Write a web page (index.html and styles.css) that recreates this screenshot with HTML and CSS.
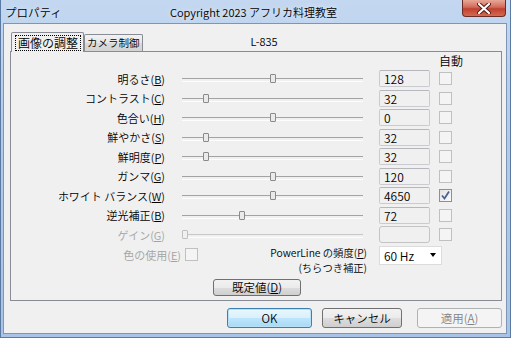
FILE: index.html
```html
<!DOCTYPE html>
<html lang="ja">
<head>
    <meta charset="UTF-8">
    <title>プロパティ</title>
    <link rel="stylesheet" href="styles.css">
</head>
<body>
    <div class="window">
        <div class="titlebar">
            <span class="app-name">プロパティ</span>
            <span class="caption">Copyright 2023 アフリカ料理教室</span>
            <div class="close-btn">
                <svg width="14" height="11" viewBox="0 0 14 11">
                    <path d="M2 1 L12 10 M12 1 L2 10" stroke="#4a1a14" stroke-width="4" stroke-linecap="round"/>
                    <path d="M2 1 L12 10 M12 1 L2 10" stroke="#fff" stroke-width="2.2" stroke-linecap="round"/>
                </svg>
            </div>
        </div>

        <div class="client">
            <div class="tab-strip">
                <div class="tab active"><span class="focus">画像の調整</span></div>
                <div class="tab">カメラ制御</div>
                <span class="model">L-835</span>
            </div>

            <div class="tab-panel">
                <div class="grid-head"><span>自動</span></div>

                <div class="prop-row">
                    <span class="prop-name">明るさ(<u>B</u>)</span>
                    <div class="slider"><span class="thumb" style="left: 88px"></span></div>
                    <div class="value">128</div>
                    <span class="check"></span>
                </div>
                <div class="prop-row">
                    <span class="prop-name">コントラスト(<u>C</u>)</span>
                    <div class="slider"><span class="thumb" style="left: 21px"></span></div>
                    <div class="value">32</div>
                    <span class="check"></span>
                </div>
                <div class="prop-row">
                    <span class="prop-name">色合い(<u>H</u>)</span>
                    <div class="slider"><span class="thumb" style="left: 88px"></span></div>
                    <div class="value">0</div>
                    <span class="check"></span>
                </div>
                <div class="prop-row">
                    <span class="prop-name">鮮やかさ(<u>S</u>)</span>
                    <div class="slider"><span class="thumb" style="left: 21px"></span></div>
                    <div class="value">32</div>
                    <span class="check"></span>
                </div>
                <div class="prop-row">
                    <span class="prop-name">鮮明度(<u>P</u>)</span>
                    <div class="slider"><span class="thumb" style="left: 21px"></span></div>
                    <div class="value">32</div>
                    <span class="check"></span>
                </div>
                <div class="prop-row">
                    <span class="prop-name">ガンマ(<u>G</u>)</span>
                    <div class="slider"><span class="thumb" style="left: 88px"></span></div>
                    <div class="value">120</div>
                    <span class="check"></span>
                </div>
                <div class="prop-row">
                    <span class="prop-name">ホワイト バランス(<u>W</u>)</span>
                    <div class="slider"><span class="thumb" style="left: 88px"></span></div>
                    <div class="value">4650</div>
                    <span class="check checked">
                        <svg width="11" height="11" viewBox="0 0 11 11">
                            <path d="M2 5.5 L4.5 8.5 L9 1.5" fill="none" stroke="#4d5f96" stroke-width="1.8"/>
                        </svg>
                    </span>
                </div>
                <div class="prop-row">
                    <span class="prop-name">逆光補正(<u>B</u>)</span>
                    <div class="slider"><span class="thumb" style="left: 57px"></span></div>
                    <div class="value">72</div>
                    <span class="check"></span>
                </div>
                <div class="prop-row disabled">
                    <span class="prop-name">ゲイン(<u>G</u>)</span>
                    <div class="slider"><span class="thumb" style="left: 0px"></span></div>
                    <div class="value empty"></div>
                    <span class="check"></span>
                </div>

                <div class="extra-row">
                    <div class="color-use">
                        <span>色の使用(<u>E</u>)</span>
                        <span class="check"></span>
                    </div>
                    <div class="powerline-label">
                        <span class="line">PowerLine の頻度(<u>P</u>)</span>
                        <span class="line">(ちらつき補正)</span>
                    </div>
                    <div class="combo">
                        <span>60 Hz</span>
                        <span class="arrow"></span>
                    </div>
                </div>

                <div class="default-row">
                    <button class="btn default-values">既定値(<u>D</u>)</button>
                </div>
            </div>

            <div class="dialog-buttons">
                <button class="btn primary ok">OK</button>
                <button class="btn cancel">キャンセル</button>
                <button class="btn apply" disabled>適用(<u>A</u>)</button>
            </div>
        </div>
    </div>
</body>
</html>
```

FILE: styles.css
```css
* {
    margin: 0;
    padding: 0;
    box-sizing: border-box;
}

body {
    width: 511px;
    height: 338px;
    overflow: hidden;
    font-family: "Noto Sans CJK JP", "Noto Sans", sans-serif;
    font-size: 11px;
    font-weight: 350;
    color: #000;
    background: #fff;
}

.window {
    width: 511px;
    height: 338px;
    display: flex;
    flex-direction: column;
    background: linear-gradient(to bottom, #c3d7f0 0%, #b2cbea 40%, #a9c3e6 100%);
    border: 1px solid #5a7aa4;
    border-top: none;
    padding: 0 3px 3px 2px;
}

.titlebar {
    height: 23px;
    display: flex;
    align-items: center;
    flex-shrink: 0;
}

.app-name {
    width: 167px;
    padding-left: 2px;
    font-size: 11.5px;
    line-height: 20px;
    text-shadow: 0 0 6px rgba(255, 255, 255, 0.8);
}

.caption {
    font-size: 11px;
    line-height: 20px;
    text-shadow: 0 0 6px rgba(255, 255, 255, 0.8);
}

.close-btn {
    margin-left: auto;
    margin-right: 1px;
    align-self: flex-start;
    width: 44px;
    height: 17px;
    border: 1px solid #6a2c25;
    border-top: none;
    border-radius: 0 0 4px 4px;
    background: linear-gradient(to bottom, #e8a899 0%, #d26a5a 45%, #c0402f 55%, #d46a52 100%);
    display: flex;
    align-items: center;
    justify-content: center;
}

.client {
    flex: 1;
    background: #f0f0f0;
    border: 1px solid #7d95b7;
    display: flex;
    flex-direction: column;
}

/* tabs */
.tab-strip {
    height: 27px;
    display: flex;
    align-items: flex-end;
    padding-left: 7px;
    flex-shrink: 0;
}

.tab {
    height: 17px;
    padding: 0 2px;
    border: 1px solid #898c95;
    border-bottom: none;
    border-radius: 2px 2px 0 0;
    background: linear-gradient(to bottom, #f2f2f2 0%, #e6e6e6 50%, #d9d9d9 51%, #d4d4d4 100%);
    font-size: 10.5px;
    line-height: 16px;
}

.tab.active {
    height: 20px;
    margin-bottom: -1px;
    padding: 2px 2px 0 3px;
    background: #f0f0f0;
    position: relative;
    z-index: 1;
}

.focus {
    display: block;
    border: 1px dotted #000;
    padding: 0 2px;
    line-height: 14px;
    font-size: 12px;
}

.model {
    align-self: flex-start;
    margin-top: 10px;
    margin-left: 108px;
    line-height: 14px;
}

.tab-panel {
    height: 250px;
    margin: 0 4px 0 6px;
    border: 1px solid #898c95;
    background: #f0f0f0;
    flex-shrink: 0;
}

.grid-head {
    height: 17px;
    padding-left: 428px;
    font-size: 12px;
    line-height: 17px;
}

.prop-row {
    height: 19.5px;
    display: flex;
    align-items: center;
}

.prop-name {
    width: 154px;
    text-align: right;
    line-height: 14px;
    white-space: nowrap;
}

.slider {
    width: 181px;
    height: 9px;
    margin-left: 17px;
    position: relative;
}

.slider::before {
    content: "";
    position: absolute;
    left: 0;
    right: 0;
    top: 4px;
    height: 2px;
    border-top: 1px solid #a3a3a3;
    border-bottom: 1px solid #fdfdfd;
}

.thumb {
    position: absolute;
    top: 0;
    width: 6px;
    height: 9px;
    border: 1px solid #8a8a8a;
    border-radius: 1px;
    background: #eaeaea;
}

.value {
    width: 51px;
    height: 17px;
    margin-left: 16px;
    padding-left: 4px;
    border: 1px solid #c9cbd0;
    border-top-color: #b5b7bc;
    border-radius: 2px;
    background: #f0f0f0;
    font-size: 12px;
    line-height: 15px;
}

.check {
    width: 13px;
    height: 13px;
    margin-left: 9px;
    border: 1px solid #c0c0c0;
    background: #f4f4f4;
    display: flex;
    align-items: center;
    justify-content: center;
}

.check.checked {
    border-color: #8f8f8f;
    background: linear-gradient(135deg, #e3e3e3, #fbfbfb);
}

.prop-row.disabled .prop-name {
    color: #a3a3a3;
}

.prop-row.disabled .slider::before {
    border-top-color: #c8c8c8;
}

.prop-row.disabled .thumb {
    border-color: #c0c0c0;
    background: #f0f0f0;
}

.value.empty {
    border-color: #c4c4c4;
    border-radius: 3px;
}

/* bottom part of the panel */
.extra-row {
    height: 29px;
    display: flex;
    align-items: flex-start;
}

.color-use {
    width: 187px;
    height: 20px;
    display: flex;
    align-items: center;
    justify-content: flex-end;
    color: #a3a3a3;
    line-height: 14px;
}

.color-use .check {
    margin-left: 4px;
}

.powerline-label {
    width: 169px;
    display: flex;
    flex-direction: column;
    align-items: flex-end;
    white-space: nowrap;
    font-size: 10.3px;
}

.powerline-label .line {
    height: 15px;
    line-height: 15px;
}

.combo {
    width: 63px;
    height: 19px;
    margin-left: 12px;
    margin-top: 1px;
    padding-left: 4px;
    border: 1px solid #dcdcdc;
    background: #fff;
    display: flex;
    align-items: center;
    font-size: 12px;
}

.arrow {
    margin-left: auto;
    margin-right: 5px;
    width: 0;
    height: 0;
    border-left: 3.5px solid transparent;
    border-right: 3.5px solid transparent;
    border-top: 4px solid #000;
}

.default-row {
    padding: 5px 0 0 202px;
}

/* buttons */
.btn {
    height: 17px;
    font-family: inherit;
    font-size: 11.5px;
    font-weight: 350;
    color: #000;
    border: 1px solid #707070;
    border-radius: 3px;
    background: linear-gradient(to bottom, #f2f2f2 0%, #ebebeb 50%, #dddddd 50%, #cfcfcf 100%);
    line-height: 14px;
}

.default-values {
    width: 88px;
}

.dialog-buttons {
    display: flex;
    justify-content: flex-end;
    padding: 7px 4px 0 0;
}

.dialog-buttons .btn {
    height: 20px;
}

.ok {
    width: 85px;
}

.cancel {
    width: 80px;
    margin-left: 10px;
}

.apply {
    width: 85px;
    margin-left: 15px;
}

.btn.primary {
    border-color: #3c7fb1;
    background: linear-gradient(to bottom, #eaf6fd 0%, #d9f0fc 50%, #bee6fd 50%, #a7d9f5 100%);
    box-shadow: inset 0 0 0 1px #b9e1f5;
}

.btn:disabled {
    border-color: #adb2b5;
    background: #f4f4f4;
    color: #838383;
}
```
